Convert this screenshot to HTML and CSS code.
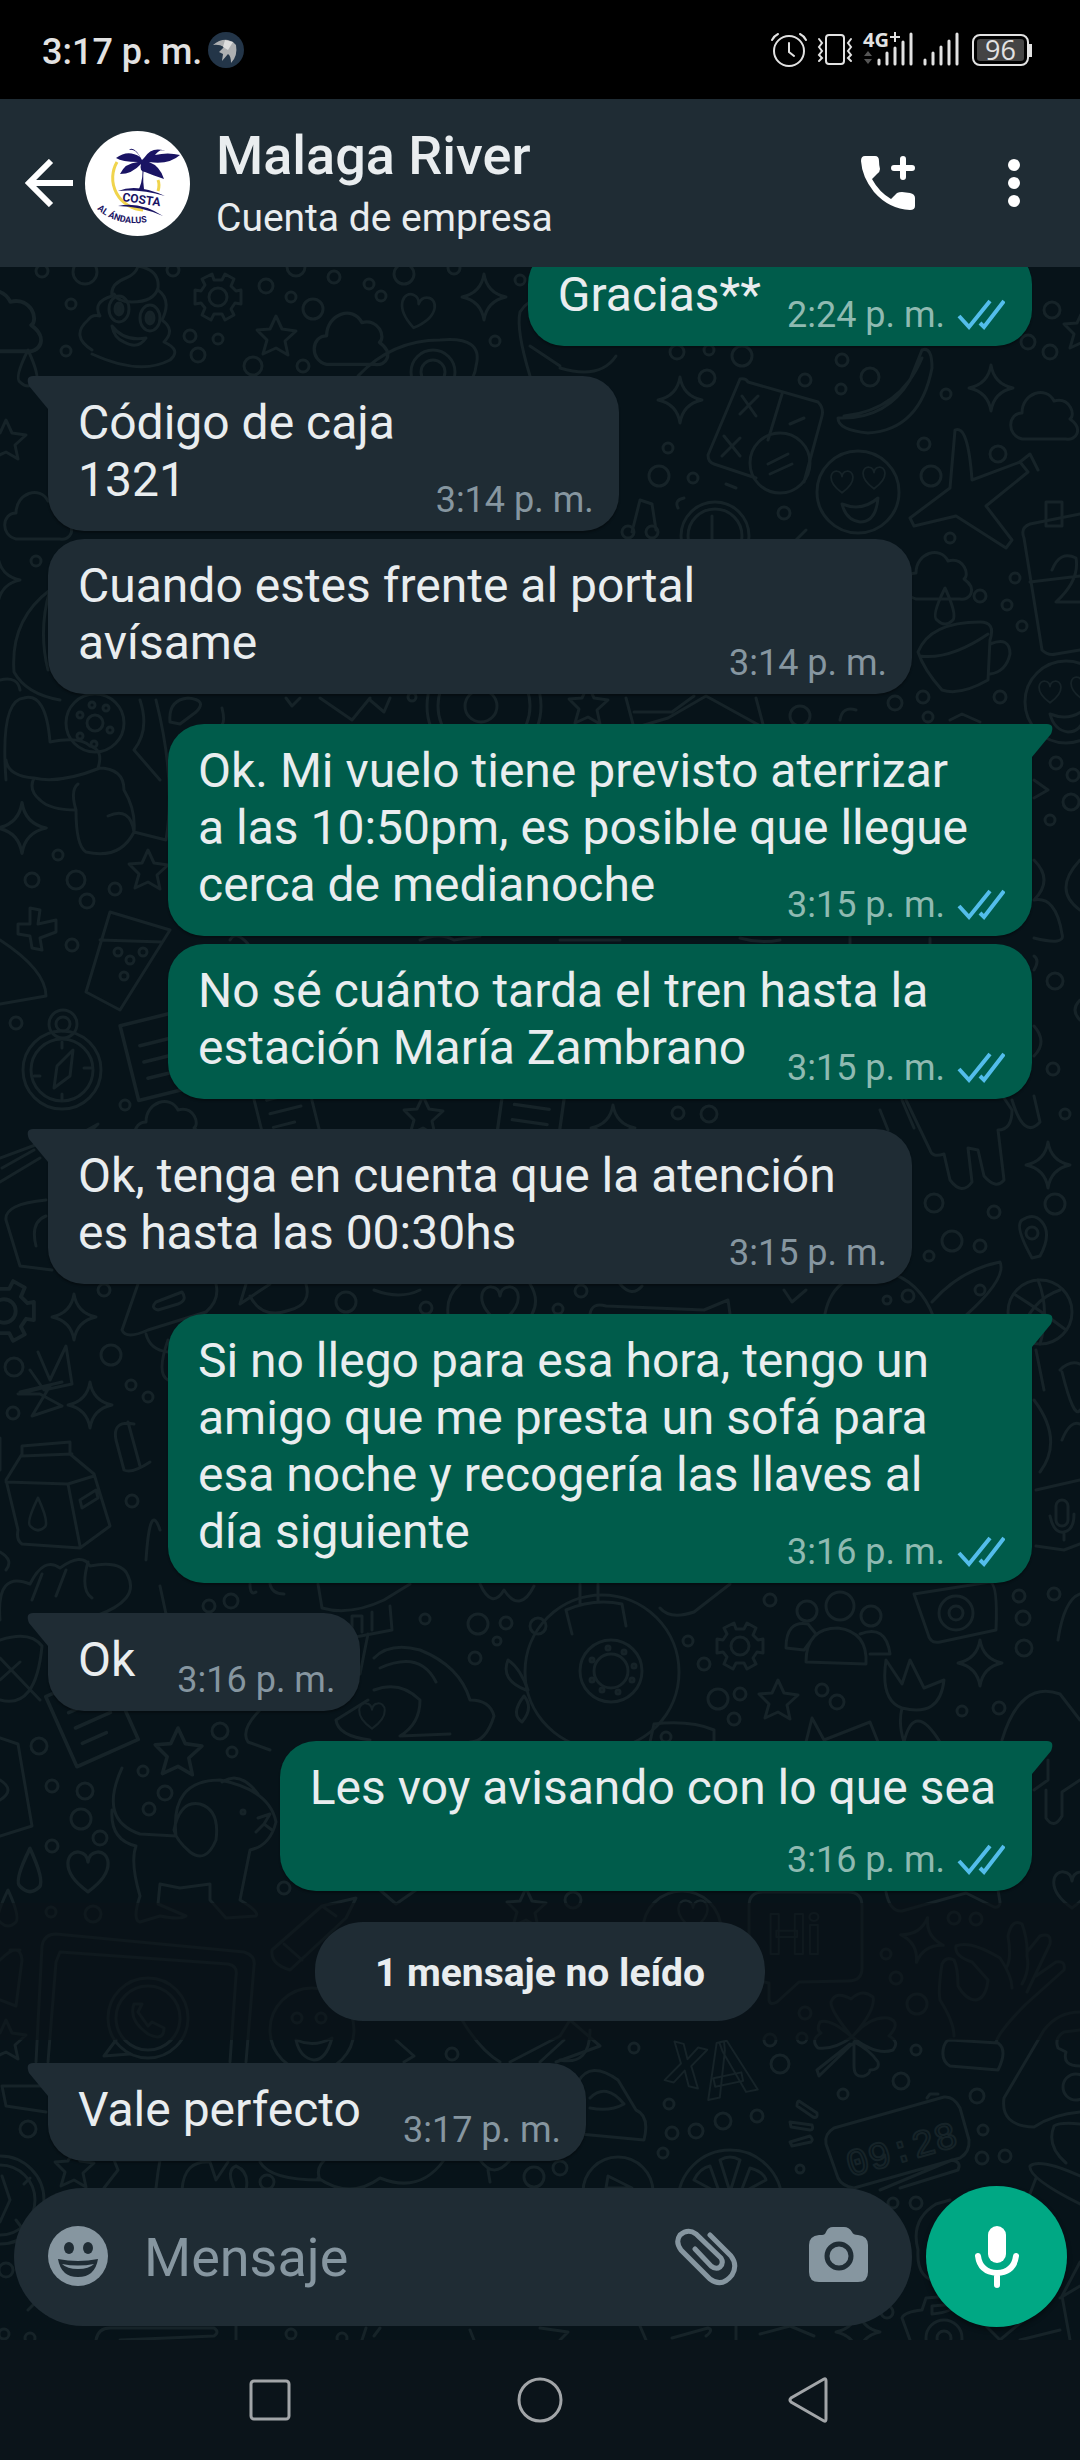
FILE: index.html
```html
<!DOCTYPE html>
<html lang="es">
<head>
<meta charset="utf-8">
<meta name="viewport" content="width=device-width, initial-scale=1">
<title>Malaga River</title>
<link rel="stylesheet" href="styles.css">
</head>
<body>
<svg class="sprite" aria-hidden="true">
  <defs>
    <symbol id="ticks" viewBox="0 0 48 32"><path d="M2 17 L12 28 L33 2 M23 24 L27 28 L47 2" fill="none" stroke="#53bdeb" stroke-width="4"/></symbol>
    <path id="spark" d="M0 -23 Q3 -4 22 0 Q3 4 0 23 Q-3 4 -22 0 Q-3 -4 0 -23Z"/>
    <path id="star" d="M0 -20 L6 -7 L20 -5 L9 5 L12 19 L0 12 L-13 18 L-9 4 L-19 -6 L-6 -7Z"/>
    <path id="heart" d="M0 18 C-28 -2 -18 -20 -8 -18 Q-1 -17 0 -9 Q1 -17 8 -18 C18 -20 28 -2 0 18Z"/>
    <path id="cloud" d="M-24 24 C-40 20 -38 -2 -24 -2 C-24 -22 0 -30 8 -14 C24 -18 30 0 24 4 C38 14 30 26 20 24Z"/>
    <path id="drop" d="M0 -18 Q-14 10 -8 14 Q0 22 8 14 Q12 8 0 -18Z"/>
    <path id="note" d="M-28 -32 H28 V32 H-28Z M-16 -12 H16 M-16 2 H16 M-16 16 H6"/>
    <g id="gear"><circle r="9"/><path d="M-6 -23 L-4 -17 H4 L7 -23 L16 -18 L13 -11 L18 -6 L23 -7 V7 L17 6 L13 12 L16 18 L7 23 L4 17 H-4 L-7 23 L-16 18 L-13 11 L-17 6 L-23 7 V-7 L-17 -6 L-13 -12 L-16 -18Z"/></g>
    <g id="love"><circle r="41"/><use href="#heart" transform="translate(-16 -10) scale(.6)"/><use href="#heart" transform="translate(16 -14) scale(.6)"/><path d="M-16 12 Q4 20 20 6 Q18 30 2 30 Q-12 28 -16 12Z"/></g>
    <g id="face"><circle r="42"/><circle cx="-15" cy="-12" r="5"/><circle cx="9" cy="-12" r="5"/><path d="M-16 10 Q2 18 20 8 Q14 30 2 30 Q-12 28 -16 10Z"/></g>
  </defs>
</svg>

<div class="phone">
  <div class="status">
    <span class="status-time">3:17 p. m.</span>
    <svg class="bird" viewBox="0 0 36 36" aria-hidden="true"><circle cx="18" cy="18" r="18" fill="#233548"/><path d="M5 13 Q12 7 20 8 L25 10 L28 13 Q30 24 23 31 Q23 24 20 22 L14 29 L15 22 L11 20 L16 15 Q11 12 5 13Z" fill="#aeb0b2"/><path d="M17 8 L25 10 L20 18 L15 15Z" fill="#dedede"/></svg>
    <div class="status-icons">
      <svg class="i-alarm" viewBox="0 0 36 36" fill="none" stroke="#e2e2e2" stroke-width="2" stroke-linecap="round" aria-hidden="true"><circle cx="18" cy="19" r="15"/><path d="M18 11 V20 L23 24 M1 8 Q3 4 7 2 M29 2 Q33 4 35 8"/></svg>
      <svg class="i-vibrate" viewBox="0 0 36 36" fill="none" stroke="#e2e2e2" stroke-width="2" stroke-linecap="round" aria-hidden="true"><rect x="9" y="3" width="18" height="29" rx="3"/><path d="M2 7 L5 11 L2 15 L5 19 L2 23 L5 26 L2 29 M34 7 L31 11 L34 15 L31 19 L34 23 L31 26 L34 29"/></svg>
      <svg class="i-signal-4g" viewBox="0 0 50 36" aria-hidden="true"><text x="0" y="15" class="net">4G</text><path d="M32 0 V10 M27 5 H37" stroke="#e2e2e2" stroke-width="2"/><path d="M16 28 V32 M24 21 V32 M32 16 V32 M40 10 V32 M48 2 V32" stroke="#e2e2e2" stroke-width="3" stroke-linecap="round"/><path d="M1 24 L5 19 L9 24Z M1 27 L5 32 L9 27Z" fill="#555"/></svg>
      <svg class="i-signal" viewBox="0 0 36 36" aria-hidden="true"><path d="M2 28 V32 M10 21 V32 M18 15 V32 M26 9 V32 M34 2 V32" stroke="#e2e2e2" stroke-width="3" stroke-linecap="round"/></svg>
      <span class="battery">96</span>
    </div>
  </div>

  <header class="header">
    <button class="icon-btn" aria-label="Atrás"><svg width="48" height="48" viewBox="0 0 48 48" fill="none" stroke="#fff" stroke-width="6" aria-hidden="true"><path d="M26 2 L4 24 L26 46 M4 24 H48"/></svg></button>
    <svg class="avatar" viewBox="0 0 105 105" aria-hidden="true">
      <circle cx="52.5" cy="52.5" r="52.5" fill="#fff"/>
      <path d="M32 31 A32 32 0 0 0 58 79 M73 49 Q75 54 73 60" fill="none" stroke="#f0d44c" stroke-width="3"/>
      <g fill="#1a1464">
        <path d="M57 29 Q49 14 44 19 Q50 17 55 26 Q43 18 31 27 Q37 31 53 31 Q40 32 35 43 Q47 43 56 33 Q54 40 60 41 Q67 44 79 48 Q75 35 64 31 Q84 34 95 24 Q83 21 70 24 Q76 17 80 20 Q67 15 59 27Z"/>
        <path d="M57 31 H60 Q57 44 59 58 H54 Q59 47 57 31Z"/>
        <path d="M33 60 Q52 52 80 65 Q55 58 33 60Z M33 75 Q55 70 78 85 Q55 75 33 75Z"/>
        <text x="37" y="70" transform="rotate(8 37 70)" class="logo-a">COSTA</text>
        <path id="logo-curve" d="M12 78 Q32 96 63 91" fill="none"/>
        <text class="logo-b"><textPath href="#logo-curve">AL ÁNDALUS</textPath></text>
      </g>
    </svg>
    <div class="contact">
      <h1>Malaga River</h1>
      <p>Cuenta de empresa</p>
    </div>
    <div class="actions">
      <button class="icon-btn" aria-label="Llamar"><svg width="54" height="56" viewBox="0 0 54 56" aria-hidden="true"><path d="M4 1 H14 Q18 1 18 6 Q18 10 19 14 Q19 17 16 19 L11 24 Q18 37 30 44 L36 38 Q38 37 41 37 L49 38 Q54 39 54 43 V51 Q54 55 49 55 Q28 54 13 37 Q1 22 0 6 Q0 1 4 1Z" fill="#fff"/><path d="M42 4 V22 M33 13 H51" stroke="#fff" stroke-width="6" stroke-linecap="round"/></svg></button>
      <button class="icon-btn" aria-label="Más opciones"><svg width="12" height="48" viewBox="0 0 12 48" fill="#fff" aria-hidden="true"><circle cx="6" cy="6" r="6"/><circle cx="6" cy="24" r="6"/><circle cx="6" cy="42" r="6"/></svg></button>
    </div>
  </header>

  <main class="chat">
    <svg class="wallpaper" viewBox="0 267 1080 2073" preserveAspectRatio="xMidYMin slice" aria-hidden="true">
      <!-- small bubbles -->
      <g>
        <circle cx="42" cy="271" r="6"/><circle cx="85" cy="272" r="12"/><circle cx="173" cy="270" r="6"/><circle cx="266" cy="286" r="7"/><circle cx="291" cy="297" r="5"/><circle cx="313" cy="309" r="10"/><circle cx="296" cy="267" r="9"/><circle cx="334" cy="277" r="6"/><circle cx="369" cy="284" r="5"/><circle cx="381" cy="296" r="5"/><circle cx="404" cy="274" r="10"/><circle cx="454" cy="268" r="6"/><circle cx="520" cy="280" r="5"/><circle cx="71" cy="304" r="5"/><circle cx="66" cy="351" r="5"/><circle cx="190" cy="336" r="6"/><circle cx="218" cy="339" r="5"/><circle cx="198" cy="355" r="7"/><circle cx="253" cy="366" r="9"/><circle cx="303" cy="366" r="6"/><circle cx="495" cy="341" r="5"/><circle cx="1052" cy="310" r="8"/><circle cx="1028" cy="342" r="7"/><circle cx="1050" cy="352" r="7"/><circle cx="677" cy="352" r="7"/><circle cx="709" cy="350" r="5"/><circle cx="742" cy="356" r="10"/>
        <circle cx="707" cy="378" r="8"/><circle cx="805" cy="380" r="6"/><circle cx="841" cy="389" r="5"/><circle cx="842" cy="360" r="6"/><circle cx="870" cy="377" r="9"/><circle cx="946" cy="394" r="5"/><circle cx="924" cy="444" r="6"/><circle cx="998" cy="454" r="8"/><circle cx="668" cy="448" r="5"/><circle cx="659" cy="476" r="10"/><circle cx="693" cy="478" r="5"/><circle cx="931" cy="476" r="10"/><circle cx="784" cy="513" r="6"/><circle cx="950" cy="538" r="5"/><circle cx="980" cy="596" r="6"/><circle cx="1007" cy="605" r="5"/><circle cx="1015" cy="578" r="5"/><circle cx="1022" cy="626" r="5"/><circle cx="36" cy="561" r="5"/><circle cx="895" cy="703" r="7"/><circle cx="923" cy="697" r="6"/><circle cx="1000" cy="697" r="6"/><circle cx="928" cy="717" r="5"/><circle cx="412" cy="697" r="4"/><circle cx="800" cy="716" r="10"/>
        <circle cx="58" cy="855" r="5"/><circle cx="32" cy="880" r="7"/><circle cx="76" cy="880" r="9"/><circle cx="115" cy="889" r="6"/><circle cx="87" cy="901" r="7"/><circle cx="72" cy="945" r="6"/><circle cx="16" cy="1023" r="6"/><circle cx="125" cy="1105" r="5"/><circle cx="678" cy="1113" r="6"/><circle cx="709" cy="1114" r="8"/><circle cx="1056" cy="763" r="6"/><circle cx="1073" cy="775" r="6"/><circle cx="1071" cy="802" r="8"/><circle cx="1050" cy="820" r="5"/><circle cx="1055" cy="981" r="8"/><circle cx="1053" cy="1069" r="6"/><circle cx="1065" cy="1114" r="5"/>
        <circle cx="934" cy="1203" r="9"/><circle cx="1055" cy="1204" r="10"/><circle cx="994" cy="1212" r="6"/><circle cx="952" cy="1241" r="10"/><circle cx="980" cy="1246" r="6"/><circle cx="929" cy="1256" r="5"/><circle cx="104" cy="1290" r="6"/><circle cx="111" cy="1355" r="10"/><circle cx="14" cy="1367" r="9"/><circle cx="131" cy="1385" r="5"/><circle cx="148" cy="1397" r="5"/><circle cx="13" cy="1413" r="6"/><circle cx="346" cy="1302" r="10"/><circle cx="426" cy="1308" r="6"/><circle cx="581" cy="1291" r="6"/><circle cx="558" cy="1309" r="5"/><circle cx="132" cy="1501" r="6"/>
        <circle cx="425" cy="1619" r="5"/><circle cx="478" cy="1624" r="10"/><circle cx="506" cy="1623" r="6"/><circle cx="538" cy="1626" r="8"/><circle cx="497" cy="1641" r="4"/><circle cx="475" cy="1658" r="6"/><circle cx="688" cy="1641" r="5"/><circle cx="704" cy="1664" r="6"/><circle cx="718" cy="1699" r="10"/><circle cx="740" cy="1694" r="6"/><circle cx="770" cy="1600" r="6"/><circle cx="822" cy="1690" r="6"/><circle cx="837" cy="1702" r="7"/><circle cx="734" cy="1719" r="6"/><circle cx="1019" cy="1596" r="6"/><circle cx="1054" cy="1594" r="6"/><circle cx="1023" cy="1618" r="7"/><circle cx="1024" cy="1648" r="8"/><circle cx="962" cy="1711" r="5"/><circle cx="999" cy="1708" r="6"/><circle cx="39" cy="1746" r="8"/><circle cx="220" cy="1731" r="8"/><circle cx="232" cy="1752" r="5"/><circle cx="143" cy="1771" r="5"/><circle cx="52" cy="1786" r="6"/><circle cx="85" cy="1791" r="8"/><circle cx="81" cy="1819" r="10"/><circle cx="165" cy="1793" r="7"/><circle cx="149" cy="1809" r="6"/><circle cx="100" cy="1838" r="7"/><circle cx="52" cy="1846" r="6"/><circle cx="284" cy="1888" r="6"/><circle cx="573" cy="1900" r="8"/><circle cx="51" cy="1912" r="5"/><circle cx="93" cy="1914" r="8"/>
        <circle cx="954" cy="1918" r="6"/><circle cx="976" cy="1919" r="6"/><circle cx="886" cy="1954" r="5"/><circle cx="896" cy="1978" r="6"/><circle cx="917" cy="2004" r="10"/><circle cx="805" cy="2013" r="6"/><circle cx="770" cy="2040" r="6"/><circle cx="802" cy="2038" r="5"/><circle cx="916" cy="2050" r="5"/><circle cx="780" cy="2064" r="9"/><circle cx="901" cy="2081" r="8"/><circle cx="843" cy="2094" r="5"/><circle cx="977" cy="2096" r="7"/><circle cx="634" cy="2048" r="5"/><circle cx="452" cy="2054" r="6"/><circle cx="669" cy="2104" r="5"/><circle cx="757" cy="2116" r="6"/><circle cx="723" cy="2121" r="8"/><circle cx="672" cy="2133" r="6"/><circle cx="696" cy="2131" r="7"/><circle cx="663" cy="2153" r="5"/><circle cx="28" cy="2129" r="8"/><circle cx="983" cy="2130" r="5"/><circle cx="982" cy="2158" r="6"/><circle cx="1005" cy="2156" r="6"/><circle cx="560" cy="2168" r="7"/><circle cx="534" cy="2177" r="10"/><circle cx="267" cy="2182" r="7"/><circle cx="800" cy="2169" r="4"/><circle cx="893" cy="2203" r="5"/><circle cx="916" cy="2203" r="6"/><circle cx="887" cy="2312" r="6"/><circle cx="4" cy="2334" r="5"/><circle cx="30" cy="2338" r="5"/><circle cx="291" cy="2334" r="5"/><circle cx="6" cy="2270" r="7"/><circle cx="342" cy="2338" r="5"/>
      </g>
      <!-- repeated shapes -->
      <use href="#gear" x="218" y="297"/><use href="#gear" x="740" y="1646"/><use href="#gear" transform="translate(4 1311) scale(1.3)"/>
      <use href="#heart" transform="translate(417 312) rotate(12) scale(.9)"/><use href="#heart" transform="translate(88 1872) scale(1.1)"/><use href="#heart" transform="translate(372 1716) scale(.7)"/><use href="#heart" transform="translate(500 1305) scale(1)"/><use href="#heart" transform="translate(1072 1890)"/><use href="#heart" transform="translate(693 1915) scale(.8)"/>
      <use href="#spark" x="484" y="297"/><use href="#spark" x="680" y="400"/><use href="#spark" x="991" y="388"/><use href="#spark" transform="translate(22 828) scale(1.1)"/><use href="#spark" x="74" y="1317"/><use href="#spark" x="90" y="1405"/><use href="#spark" x="1048" y="1165"/><use href="#spark" x="980" y="1663"/><use href="#spark" transform="translate(922 1940) rotate(14)"/><use href="#spark" x="858" y="2332"/><use href="#spark" x="613" y="1128"/><use href="#spark" x="-2" y="580"/>
      <use href="#star" x="276" y="336"/><use href="#star" x="1083" y="330"/><use href="#star" x="6" y="440"/><use href="#star" x="588" y="705"/><use href="#star" x="148" y="870"/><use href="#star" x="423" y="1116"/><use href="#star" x="778" y="1700"/><use href="#star" transform="translate(178 1752) scale(1.2)"/><use href="#star" x="74" y="2168"/><use href="#star" x="6" y="2040"/><use href="#star" x="526" y="1908"/>
      <use href="#cloud" transform="translate(0 320) scale(1.3)"/><use href="#cloud" transform="translate(353 338) scale(1.1)"/><use href="#cloud" transform="translate(1046 415)"/><use href="#cloud" x="40" y="515"/><use href="#cloud" transform="translate(940 575)"/><use href="#cloud" transform="translate(170 1124)"/>
      <use href="#drop" x="945" y="606"/><use href="#drop" x="28" y="368"/><use href="#drop" transform="translate(30 1870) scale(1.2)"/><use href="#drop" x="8" y="1908"/>
      <use href="#love" x="858" y="492"/><use href="#love" x="1066" y="702"/><use href="#face" x="312" y="2030"/>
      <use href="#note" transform="translate(92 1718) rotate(-24) scale(1.2)"/><use href="#note" transform="translate(162 1055) rotate(-14) scale(1.2)"/><use href="#note" transform="translate(285 1108) rotate(-14)"/><use href="#note" transform="translate(530 1120) rotate(8) scale(1.1)"/>
      <!-- ice swirl, avocado, calculator, banana -->
      <path d="M92 350 Q70 336 88 320 Q92 314 100 316 Q92 302 112 296 Q110 284 126 278 Q136 274 138 266 Q160 270 158 288 Q154 302 132 302 Q118 302 114 294 M158 290 Q172 300 162 320 Q176 330 164 342 Q182 350 170 360 Q140 376 92 354 M112 326 Q124 342 146 338 Q138 350 124 342 Q114 338 112 326"/>
      <ellipse cx="119" cy="309" rx="10" ry="13"/><ellipse cx="150" cy="318" rx="10" ry="13"/>
      <ellipse class="solid" cx="119" cy="309" rx="4" ry="6"/><ellipse class="solid" cx="150" cy="318" rx="4" ry="6"/>
      <path d="M358 376 Q392 340 440 340 Q484 336 476 366 Q474 390 440 396"/><circle cx="433" cy="372" r="22"/><circle cx="433" cy="372" r="12"/>
      <path d="M530 376 Q516 330 520 312 Q530 296 546 300 M560 368 Q600 380 616 356 M530 346 L560 366"/>
      <path d="M740 379 Q746 378 748 382 L818 402 Q824 408 822 416 L804 482 M740 379 L708 455 Q708 462 714 464 L756 478 M742 396 L756 416 M758 396 L740 414 M724 436 L740 456 M740 438 L722 456 M782 394 L768 440 M790 424 L804 418"/><circle cx="780" cy="463" r="30"/><path d="M768 464 L788 454 M770 474 L792 464"/>
      <path d="M922 350 Q932 346 932 368 Q920 430 868 433 Q838 430 838 418 Q886 420 910 380Z M844 416 Q900 410 922 358"/>
      <path d="M955 430 Q968 424 972 480 L1020 462 L1028 472 L986 506 L1012 540 L1006 548 L956 516 L914 526 L910 518 L950 488Z"/><path d="M1020 462 L1030 454 L1038 470 M1046 502 H1062 V526 H1046Z"/>
      <path d="M1080 514 L1030 524 Q1020 528 1024 538 L1042 650 Q1048 656 1056 654 L1080 650 M1030 582 L1080 576 M1052 570 Q1060 550 1076 558 Q1080 580 1056 602 H1080"/>
      <path d="M640 500 L632 532 M652 504 L656 530 M640 500 L652 504"/><circle cx="628" cy="532" r="6"/><circle cx="652" cy="532" r="6"/><circle cx="715" cy="536" r="34"/><circle cx="715" cy="536" r="27"/><path d="M712 516 V540 L704 546 M678 508 Q674 500 684 498 M736 488 L726 484 M796 540 L806 530"/>
      <path d="M918 652 Q930 622 980 622 Q996 622 990 640 L988 680 Q960 696 942 690 Q924 670 918 652Z M920 656 Q950 660 988 634 M990 644 Q1010 636 1010 654 Q1006 672 990 674"/>
      <!-- left column: wreath, hand, donut -->
      <path d="M50 590 Q10 620 14 672 Q26 694 60 700 M50 590 Q38 630 48 670 M0 680 Q18 676 20 690 M6 780 Q0 700 24 698 Q46 692 50 742 Q80 736 90 746 Q104 750 98 768 Q124 768 124 790 Q136 810 134 832 Q120 860 86 852 Q76 846 76 810 Q50 810 40 800 Q28 790 34 778 Q8 776 6 760 M34 778 Q60 784 100 768 M76 810 Q70 790 78 784 M108 816 Q130 806 134 832 M134 832 L166 840 Q176 780 156 700"/>
      <circle cx="95" cy="723" r="29"/><circle cx="95" cy="723" r="8"/><circle cx="80" cy="715" r="3"/><circle cx="92" cy="705" r="3"/><circle cx="106" cy="708" r="3"/><circle cx="110" cy="730" r="3"/><circle cx="80" cy="736" r="3"/><circle cx="94" cy="744" r="3"/>
      <path d="M140 700 Q150 730 134 750 L160 780 M170 722 Q168 700 188 698 Q208 700 196 712 L180 724Z M222 708 Q226 724 220 726 M320 698 L352 720 L370 698 M286 698 L292 706 L300 698 M370 700 L384 712 L390 698"/><circle cx="484" cy="706" r="57"/><circle cx="484" cy="706" r="46"/><circle cx="481" cy="706" r="16"/>
      <path d="M626 698 L634 728 L668 718 L706 696 L764 728 L756 698 M634 712 H672 L694 696 M840 720 Q842 706 856 710 M950 720 L962 714 L980 722"/>
      <path d="M30 908 L40 910 L38 924 L56 920 L56 932 L40 938 L42 950 L32 948 L30 936 L18 934 L18 924 L30 924Z M110 912 L170 930 L120 1010 L86 992Z M100 940 L162 942 M0 940 Q46 970 46 996 L0 1004"/><circle cx="118" cy="952" r="4"/><circle cx="130" cy="960" r="4"/><circle cx="124" cy="976" r="4"/><circle cx="143" cy="952" r="4"/>
      <circle cx="62" cy="1070" r="39"/><circle cx="62" cy="1070" r="31"/><circle cx="63" cy="1024" r="14"/><circle cx="63" cy="1024" r="7"/><path d="M73 1050 L70 1076 L54 1088 L57 1066Z M62 1042 V1048 M92 1068 H84 M34 1076 H40 M62 1100 V1094"/>
      <path d="M230 940 Q236 930 248 944 M420 940 Q440 932 454 940 L480 936 M560 940 H620 M740 938 Q760 944 780 940 M850 936 V944 M930 938 V944"/>
      <!-- right edge -->
      <path d="M1034 780 L1048 790 L1034 798 M1034 860 Q1054 880 1034 900 M1034 900 Q1056 896 1062 934 Q1066 946 1034 938 M1080 860 Q1052 890 1080 910 M1034 970 Q1040 960 1034 956 M1034 1026 Q1048 1042 1034 1056 M1080 1000 Q1070 1010 1080 1020"/>
      <path d="M880 1110 L888 1130 M902 1100 L914 1128 M906 1100 L930 1150 Q932 1158 944 1154 L950 1180 Q962 1196 972 1182 L968 1148 L978 1150 L984 1176 Q996 1190 1004 1180 L998 1130 Q1012 1130 1012 1110 L1004 1098 M1012 1100 Q1024 1140 1040 1122 L1034 1096"/>
      <path d="M1032 1258 Q1014 1226 1022 1220 Q1034 1212 1042 1222 Q1052 1234 1040 1256Z"/><circle cx="1032" cy="1233" r="6"/>
      <path d="M824 1320 Q830 1270 886 1272 L898 1260 M886 1272 Q920 1280 934 1318 M932 1302 Q960 1270 1000 1262 Q1008 1280 956 1324"/><circle cx="887" cy="1300" r="4"/><circle cx="908" cy="1296" r="6"/><circle cx="980" cy="1290" r="5"/>
      <circle cx="1040" cy="1312" r="32"/><path d="M1014 1294 Q1040 1310 1066 1330 M1060 1290 Q1030 1300 1020 1336 M1038 1280 Q1050 1310 1040 1344"/>
      <path d="M1036 1350 L1044 1390 M1060 1370 Q1070 1360 1080 1364 M1062 1372 Q1074 1420 1080 1410 M1034 1400 Q1064 1440 1040 1472 M1062 1440 Q1070 1420 1080 1424 M1036 1490 L1080 1480 M1036 1546 L1064 1550 L1080 1544"/><rect x="1056" y="1500" width="12" height="26" rx="6"/><path d="M1050 1516 Q1054 1534 1064 1532 Q1074 1530 1074 1514 M1064 1532 V1540"/>
      <!-- left: flag, cone, windmill, carton, fist -->
      <path d="M0 1158 L38 1144 M0 1182 L40 1158 M2 1168 L34 1150 M46 1200 Q4 1204 6 1220 L20 1266 L52 1270 M46 1216 Q30 1222 36 1246 M80 1134 L98 1124 L88 1134"/>
      <path d="M138 1284 L122 1330 Q126 1340 148 1330 L206 1312 Q220 1300 216 1284 M156 1302 L182 1292 Q188 1300 178 1304 L158 1310 Q150 1308 156 1302 M146 1334 Q150 1350 168 1352 M246 1284 L240 1304 L270 1284 M250 1296 Q262 1320 290 1310 Q312 1304 306 1284 M374 1290 Q400 1300 420 1290 M448 1314 Q446 1296 460 1284 M530 1284 Q540 1300 532 1314 M590 1314 Q592 1302 606 1306 L704 1310 L728 1300 L730 1314 M784 1290 L792 1302 L806 1290 M620 1284 Q632 1298 642 1286"/>
      <path d="M38 1352 L50 1380 L66 1346 L72 1384 L44 1390 L30 1370 M20 1392 L62 1382 M18 1394 L40 1394 L62 1406 L32 1416 L50 1386Z M134 1424 Q112 1420 116 1440 L124 1470 Q132 1474 150 1462 M128 1422 L140 1466 M0 1438 V1470 M168 1340 Q156 1374 168 1380"/>
      <path d="M22 1446 L70 1442 V1454 L94 1474 L110 1526 L80 1548 L22 1544 Q16 1540 18 1530 L6 1480 L22 1454 Z M22 1456 L72 1454 M6 1482 L68 1484 L94 1476 M68 1484 L80 1546 M80 1500 L96 1490 L98 1498 L82 1508Z"/><use href="#drop" transform="translate(38 1514) scale(.9)"/>
      <path d="M146 1560 Q150 1500 160 1530 M0 1620 Q-4 1570 30 1584 Q44 1556 60 1568 Q82 1552 90 1566 Q122 1560 128 1576 Q140 1600 96 1616 M32 1600 L42 1574 M56 1596 L66 1570 M88 1562 Q80 1590 92 1598 M0 1552 Q14 1560 6 1570 M250 1584 Q250 1596 256 1592 M270 1584 Q272 1594 284 1594"/><circle cx="231" cy="1601" r="7"/><circle cx="209" cy="1606" r="6"/>
      <!-- bauble, people, camera, tulip -->
      <circle cx="602" cy="1672" r="77"/><circle cx="611" cy="1671" r="31"/><circle cx="611" cy="1671" r="17"/><g><circle cx="608" cy="1648" r="2"/><circle cx="624" cy="1652" r="2"/><circle cx="634" cy="1666" r="2"/><circle cx="632" cy="1680" r="2"/><circle cx="618" cy="1692" r="2"/><circle cx="602" cy="1690" r="2"/><circle cx="592" cy="1680" r="2"/><circle cx="592" cy="1660" r="2"/></g>
      <path d="M572 1634 L566 1610 Q594 1598 622 1604 L626 1626 M580 1604 V1584 M598 1602 V1584 M526 1690 Q500 1680 508 1660 Q520 1668 528 1690 M524 1696 Q510 1714 522 1722 Q534 1708 524 1696 M660 1608 Q670 1620 694 1612 L730 1584 M480 1584 Q492 1610 504 1590 Q520 1614 534 1586 M318 1584 L322 1608 Q350 1616 384 1600 L410 1584 M390 1606 L392 1630 L340 1640 L338 1620 M352 1634 V1616 H362 V1632 M372 1630 V1612"/>
      <circle cx="840" cy="1606" r="14"/><circle cx="807" cy="1611" r="10"/><circle cx="871" cy="1616" r="10"/><path d="M806 1662 Q806 1628 838 1628 Q868 1632 866 1664Z M786 1648 Q786 1620 808 1624 L816 1634 L804 1650Z M860 1634 Q886 1624 890 1654 L870 1654"/>
      <path d="M914 1594 L990 1582 Q998 1584 996 1630 L940 1642 Q930 1644 928 1634Z"/><circle cx="956" cy="1613" r="17"/><circle cx="956" cy="1613" r="7"/><path d="M1058 1640 Q1064 1600 1080 1594 M886 1660 Q880 1700 902 1708 Q940 1718 944 1680 L924 1688 L910 1660 L902 1684Z M902 1708 Q898 1724 904 1742 M904 1742 Q914 1700 940 1742 M1002 1740 Q1020 1680 1060 1694 L1080 1720 M1034 1790 L1048 1780 V1760 M1046 1790 V1818 Q1054 1830 1062 1816 V1792 L1080 1780 M650 1742 L654 1724 Q690 1720 714 1730 V1742 M806 1742 L812 1718 L824 1740 L870 1722 L878 1742"/><circle cx="666" cy="1737" r="5"/>
      <path d="M0 1640 Q30 1630 42 1646 Q36 1710 0 1700 M0 1658 L40 1700 M20 1662 L0 1680 M160 1586 L166 1614 L190 1620"/>
      <!-- swan, dog, book -->
      <path d="M374 1658 Q390 1642 420 1650 Q460 1666 470 1700 Q490 1700 494 1716 Q486 1742 470 1742 M380 1668 Q420 1650 436 1682 M374 1690 Q400 1680 420 1700 Q420 1724 400 1736 L450 1734 M368 1700 Q352 1710 336 1720 Q338 1736 370 1740 M260 1710 Q240 1730 248 1742 L270 1750 M368 1634 L360 1674"/>
      <path d="M122 1768 Q98 1820 140 1834 L176 1836 Q170 1780 220 1780 Q270 1790 276 1822 Q270 1846 250 1850 L240 1900 Q260 1912 256 1916 L226 1918 L210 1900 V1884 L180 1888 L160 1884 L158 1904 L186 1916 Q180 1920 160 1916 L140 1922 Q132 1920 140 1896 Q130 1862 136 1846 Q110 1840 112 1810 M174 1830 Q180 1800 200 1804 Q220 1810 216 1840 Q206 1864 190 1852 Q176 1840 174 1830 M222 1782 Q240 1770 258 1794"/><circle cx="243" cy="1812" r="2"/><path d="M258 1818 L270 1814 L264 1824 L256 1832 M264 1824 L272 1830"/>
      <path d="M0 1738 L18 1744 L32 1826 L0 1836 M0 1780 Q16 1790 0 1800"/>
      <!-- pencil, greeting, frame, clover, hand -->
      <path d="M356 1898 L322 1906 L272 1950 Q270 1964 290 1970 L346 1918Z M284 1944 L302 1960 M322 1906 L336 1916 M380 1890 L396 1904 L416 1890"/>
      <path d="M763 1892 H848 Q862 1892 862 1906 V1968 Q862 1981 848 1981 L799 1982 L777 2002 Q770 2006 769 2000 V1983 Q749 1980 749 1966 V1906 Q749 1892 763 1892Z"/><text x="767" y="1954" class="doodle-text">Hi</text>
      <path d="M886 1892 Q890 1912 902 1911 L966 1893 L994 1907 Q1000 1908 1000 1902 L998 1890"/><circle cx="682" cy="1930" r="39"/>
      <path d="M36 2062 L42 1946 Q44 1934 56 1934 L244 1952 Q256 1956 254 1966 L246 2062 M48 2062 L56 1962 L60 1952 L228 1964 Q238 1966 236 1976 L230 2062"/>
      <circle cx="148" cy="2018" r="40"/><circle cx="148" cy="2018" r="32"/><path d="M116 2040 L104 2056 L130 2054 M134 2004 Q128 2020 148 2034 Q164 2042 164 2028 L152 2022 L148 2026 L138 2012 L142 2004Z"/>
      <path d="M954 2036 Q954 2022 940 2000 Q938 1990 942 1964 Q946 1956 954 1960 Q958 1968 958 1986 Q966 2000 976 2000 Q986 1998 988 1980 L972 1962 Q954 1956 956 1946 Q970 1940 1000 1958 Q1012 1976 1012 1988 M1006 1968 Q1012 1960 1008 1936 Q1012 1918 1022 1924 Q1028 1940 1027 1956 Q1030 1970 1022 1984 M1027 1952 L1040 1936 Q1052 1932 1050 1944 L1027 1992 M1036 1976 L1056 1962 Q1066 1960 1064 1970 L1026 2004 Q1000 2030 996 2042 M950 2040 L998 2043 Q1008 2050 998 2070 L950 2066 Q940 2060 944 2046 Q946 2040 950 2040"/>
      <path d="M852 2037 Q830 2010 831 2002 Q836 1990 851 1999 Q862 1988 873 1997 Q876 2010 852 2037 Q830 2018 820 2022 Q816 2030 821 2033 Q810 2040 818 2048 Q834 2050 852 2037 Q870 2016 888 2018 Q902 2022 889 2036 Q900 2042 893 2050 Q876 2056 852 2037 M854 2042 V2066 Q854 2078 864 2076 Q870 2074 870 2070 Q880 2070 878 2062 Q870 2050 854 2042 M850 2044 L817 2070 L819 2076 L852 2044"/>
      <path d="M1080 2012 Q1058 2012 1044 2030 L1004 2098 Q1000 2126 1034 2127 Q1054 2114 1080 2112 M1080 2030 L1064 2032 Q1054 2038 1058 2048 L1066 2052 Q1062 2066 1080 2066"/><circle cx="1076" cy="2087" r="13"/>
      <text x="664" y="2080" class="doodle-text" transform="rotate(14 664 2080)">X</text><text x="708" y="2100" class="doodle-letter" transform="rotate(-12 708 2100)">A</text>
      <path d="M396 2040 L414 2056 L404 2062 M462 2020 Q480 2050 500 2062 M510 2062 L560 2036 L570 2020 L600 2046 L556 2062 M540 2062 L564 2040 M0 1960 Q20 1940 22 1960 Q18 1990 16 2006 L0 2000 M10 1950 H20"/>
      <!-- bottom row -->
      <path d="M560 2060 Q590 2066 590 2030 M578 2082 Q590 2060 618 2080 L636 2110 Q650 2116 644 2140 L580 2134 M590 2098 Q606 2082 624 2104 Q610 2112 590 2108 M2 2086 L6 2106 L46 2112 M44 2086 L2 2086"/>
      <path d="M799 2101 L817 2113 Q818 2119 813 2117 L797 2106 Q797 2101 799 2101Z M790 2122 L812 2125 Q814 2130 810 2130 L791 2127Z M790 2142 L810 2136 Q814 2140 811 2142 L792 2146Z"/>
      <path d="M834 2128 L944 2097 Q954 2096 960 2108 L969 2140 Q970 2152 960 2158 L854 2188 Q842 2186 838 2178 L826 2144 Q824 2134 834 2128Z M927 2098 L930 2094 L938 2094 M880 2190 L952 2160 Q962 2162 958 2170 L900 2188"/><text x="850" y="2177" class="doodle-clock" transform="rotate(-16 850 2177)">09:28</text>
      <circle cx="730" cy="2202" r="52"/><path d="M730 2192 L720 2160 Q730 2154 740 2160Z M720 2194 L694 2180 Q700 2168 710 2166Z M740 2194 L750 2168 Q764 2172 766 2180Z"/><circle cx="618" cy="2192" r="35"/><path d="M608 2176 L632 2188 H606Z"/>
      <path d="M104 2188 L118 2170 L114 2160 H160 L158 2172 L156 2188 M124 2160 V2150 H140 V2160 M182 2190 Q184 2160 210 2162 L216 2180 L228 2162 M234 2188 Q226 2170 236 2166 Q250 2172 246 2190 M260 2162 Q270 2180 320 2180 Q314 2166 330 2156 M318 2178 Q350 2200 380 2178 Q420 2194 444 2160 M480 2160 Q494 2180 510 2160 M488 2170 L490 2182"/>
      <circle cx="0" cy="2200" r="44"/><circle cx="0" cy="2200" r="35"/><path d="M2 2176 L10 2200 L0 2222 M24 2184 L30 2178 M16 2220 L22 2228 M28 2310 L38 2300 L50 2316"/>
      <path d="M1080 2176 Q1040 2158 1030 2166 Q1028 2178 1080 2204 M1036 2178 L1020 2220 M1066 2163 Q1046 2146 1054 2126 Q1060 2122 1080 2124 M918 2250 Q910 2220 936 2204 L950 2200 M918 2250 Q916 2280 940 2282 M1080 2262 L1062 2296 L1070 2340 M1060 2298 L1080 2286"/>
      <path d="M910 2340 L902 2318 Q904 2312 922 2310 L926 2298 L950 2296 M932 2306 L956 2304 Q954 2312 932 2314Z"/><circle cx="944" cy="2338" r="18"/><circle cx="944" cy="2338" r="7"/><path d="M984 2324 L1000 2340 L1026 2318 M1020 2340 L1060 2330 M96 2340 Q98 2328 110 2328 L214 2328 Q220 2332 214 2336 L120 2340 M236 2326 V2340 M366 2328 L362 2340 M374 2336 L380 2328 M470 2330 L474 2340 M540 2328 L568 2332 L560 2340 M672 2338 L708 2328 Q714 2330 706 2336 M640 2326 L646 2340 M736 2326 V2340 M760 2334 L790 2326 L814 2336"/>
    </svg>

    <div class="msg out">
      <div class="bubble one"><p>Gracias**</p><span class="meta"><time>2:24 p. m.</time><svg class="ticks"><use href="#ticks"/></svg></span></div>
    </div>
    <div class="msg in first">
      <div class="bubble short"><p>Código de caja<br>1321<span class="meta"><time>3:14 p. m.</time></span></p></div>
    </div>
    <div class="msg in">
      <div class="bubble"><p>Cuando estes frente al portal avísame<span class="meta"><time>3:14 p. m.</time></span></p></div>
    </div>
    <div class="msg out first">
      <div class="bubble"><p>Ok. Mi vuelo tiene previsto aterrizar a las 10:50pm, es posible que llegue cerca de medianoche<span class="meta"><time>3:15 p. m.</time><svg class="ticks"><use href="#ticks"/></svg></span></p></div>
    </div>
    <div class="msg out">
      <div class="bubble"><p>No sé cuánto tarda el tren hasta la estación María Zambrano<span class="meta"><time>3:15 p. m.</time><svg class="ticks"><use href="#ticks"/></svg></span></p></div>
    </div>
    <div class="msg in first">
      <div class="bubble"><p>Ok, tenga en cuenta que la atención es hasta las 00:30hs<span class="meta"><time>3:15 p. m.</time></span></p></div>
    </div>
    <div class="msg out first">
      <div class="bubble"><p>Si no llego para esa hora, tengo un amigo que me presta un sofá para esa noche y recogería las llaves al día siguiente<span class="meta"><time>3:16 p. m.</time><svg class="ticks"><use href="#ticks"/></svg></span></p></div>
    </div>
    <div class="msg in first">
      <div class="bubble one"><p>Ok</p><span class="meta"><time>3:16 p. m.</time></span></div>
    </div>
    <div class="msg out first">
      <div class="bubble stack"><p>Les voy avisando con lo que sea</p><span class="meta"><time>3:16 p. m.</time><svg class="ticks"><use href="#ticks"/></svg></span></div>
    </div>
    <div class="unread"><span>1 mensaje no leído</span></div>
    <div class="msg in first last">
      <div class="bubble one"><p>Vale perfecto</p><span class="meta"><time>3:17 p. m.</time></span></div>
    </div>

    <form class="composer">
      <div class="field">
        <button type="button" class="icon-btn" aria-label="Emojis"><svg width="61" height="61" viewBox="0 0 61 61" aria-hidden="true"><circle cx="30" cy="30" r="30" fill="#8696a0"/><g fill="#1f2c34"><ellipse cx="21" cy="22" rx="5" ry="6"/><ellipse cx="40" cy="22" rx="5" ry="6"/><path d="M10 33 Q30 37 50 33 Q47 51 30 51 Q13 51 10 33Z"/></g><path d="M14 38 Q30 41 46 38 Q41 43 30 43 Q19 43 14 38Z" fill="#8696a0"/></svg></button>
        <input type="text" placeholder="Mensaje" aria-label="Mensaje">
        <button type="button" class="icon-btn clip" aria-label="Adjuntar"><svg width="64" height="58" viewBox="0 0 64 58" fill="none" stroke="#8696a0" stroke-width="5" stroke-linecap="round" aria-hidden="true"><path d="M35 7 L56 28 Q63 37 57 47 Q47 60 35 51 L6 22 Q0 14 5 7 Q13 0 21 6 L46 30 Q49 35 45 39 Q41 42 36 38 L20 21"/></svg></button>
        <button type="button" class="icon-btn" aria-label="Cámara"><svg width="59" height="59" viewBox="0 0 59 59" aria-hidden="true"><path d="M10 8 H13 Q16 8 17 5 Q19 0 24 0 H35 Q40 0 43 5 Q44 8 49 8 Q59 9 59 18 V45 Q59 55 49 55 H10 Q0 55 0 45 V18 Q0 9 10 8Z" fill="#8696a0"/><circle cx="30" cy="29" r="12" fill="none" stroke="#1f2c34" stroke-width="5"/></svg></button>
      </div>
      <button type="button" class="mic" aria-label="Mensaje de voz"><svg width="44" height="62" viewBox="0 0 44 62" aria-hidden="true"><rect x="13" y="0" width="18" height="37" rx="9" fill="#fff"/><path d="M3 30 Q5 46 22 47 Q39 46 41 30 M22 47 V59" fill="none" stroke="#fff" stroke-width="6" stroke-linecap="round"/></svg></button>
    </form>
  </main>

  <nav class="nav">
    <button class="icon-btn" aria-label="Recientes"><svg width="46" height="46" viewBox="0 0 46 46" aria-hidden="true"><rect x="4" y="4" width="38" height="38" rx="3"/></svg></button>
    <button class="icon-btn" aria-label="Inicio"><svg width="46" height="46" viewBox="0 0 46 46" aria-hidden="true"><circle cx="23" cy="23" r="21"/></svg></button>
    <button class="icon-btn" aria-label="Volver"><svg width="46" height="46" viewBox="0 0 46 46" aria-hidden="true"><path d="M37 2 Q39 1 39 4 V42 Q39 45 37 44 L4 25 Q2 23 4 21Z"/></svg></button>
  </nav>
</div>
</body>
</html>
```

FILE: styles.css
```css
* { box-sizing: border-box; }

body {
  margin: 0;
  background: #0b141a;
  color: #e9edef;
  font-family: Roboto, "Liberation Sans", sans-serif;
}

h1, p { margin: 0; }
svg { display: block; flex: none; }
.sprite { position: absolute; width: 0; height: 0; }

.icon-btn {
  display: flex;
  flex: none;
  padding: 0;
  border: 0;
  background: none;
}

.phone {
  display: flex;
  flex-direction: column;
  height: 100vh;
}

/* status bar */
.status {
  display: flex;
  align-items: center;
  flex: none;
  height: 99px;
  padding: 0 47px 0 42px;
  background: #000;
  color: #e2e2e2;
}
.status-time { font-size: 36px; font-weight: 500; line-height: 44px; padding-top: 4px; }
.bird { width: 36px; height: 36px; margin-left: 6px; }
.status-icons { display: flex; align-items: center; gap: 10px; margin-left: auto; }
.i-alarm, .i-vibrate, .i-signal { width: 36px; height: 36px; }
.i-signal-4g { width: 50px; height: 36px; overflow: visible; }
.net { font: 700 20px "Open Sans", sans-serif; fill: #e2e2e2; }
.battery {
  position: relative;
  width: 57px;
  height: 32px;
  margin: 0 4px 0 3px;
  border: 2px solid #e2e2e2;
  border-radius: 8px;
  background: #444 content-box;
  padding: 3px;
  font: 27px/22px "Open Sans", sans-serif;
  text-align: center;
}
.battery::after {
  content: "";
  position: absolute;
  top: 8px;
  right: -5px;
  width: 3px;
  height: 13px;
  background: #e2e2e2;
}

/* chat header */
.header {
  display: flex;
  align-items: center;
  flex: none;
  height: 168px;
  padding: 0 60px 0 25px;
  background: #1f2c34;
}
.avatar { width: 105px; height: 105px; margin: 0 26px 0 12px; }
.logo-a { font: 700 12px Roboto, sans-serif; }
.logo-b { font: 700 9px Roboto, sans-serif; }
.contact h1 { font-size: 54px; font-weight: 500; line-height: 64px; }
.contact p { font-size: 39px; line-height: 48px; padding-top: 6px; }
.actions { display: flex; align-items: center; gap: 93px; margin-left: auto; }

/* conversation */
.chat {
  position: relative;
  isolation: isolate;
  display: flex;
  flex: 1;
  flex-direction: column;
  justify-content: flex-end;
  min-height: 0;
  overflow: hidden;
  background: #071319;
}
.wallpaper {
  position: absolute;
  z-index: -1;
  inset: 0;
  width: 100%;
  height: 100%;
  fill: none;
  stroke: #162328;
  stroke-width: 3;
  stroke-linejoin: round;
  stroke-linecap: round;
}
.solid { fill: #162328; }
.doodle-text { font: 700 56px Roboto, sans-serif; stroke-width: 2; }
.doodle-letter { font: 700 76px Roboto, sans-serif; stroke-width: 2; }
.doodle-clock { font: 38px "Liberation Mono", monospace; stroke-width: 2; }

.msg { display: flex; flex: none; margin-top: 8px; padding: 0 48px; }
.msg.first { margin-top: 30px; }
.msg.first.last { margin-top: 23px; }
.msg.out { justify-content: flex-end; }

.bubble {
  position: relative;
  width: 80vw;
  border-radius: 36px;
  background: #1f2c34;
  box-shadow: 0 2px 2px rgba(0, 0, 0, .3);
}
.out .bubble { background: #005c4b; }
.bubble p {
  padding: 18px 54px 23px 30px;
  font-size: 48px;
  line-height: 57px;
}
.meta {
  display: flex;
  align-items: center;
  align-self: flex-end;
  gap: 12px;
  padding: 0 25px 10px 0;
  color: #8696a0;
  font-size: 36px;
  line-height: 42px;
  white-space: nowrap;
}
.out .meta { color: #8fbab1; padding-right: 27px; }
.bubble p .meta { float: right; margin: 28px -54px -12px 0; padding-bottom: 0; }
.ticks { width: 48px; height: 32px; }

.bubble.short { width: 58%; }
.bubble.one { display: flex; width: auto; }
.bubble.one p { padding-right: 42px; }
.out .bubble.one p { padding-right: 26px; }
.bubble.stack { display: flex; flex-direction: column; width: auto; }
.bubble.stack p { padding: 18px 36px 23px 30px; }

.first .bubble::before {
  content: "";
  position: absolute;
  top: 0;
  width: 22px;
  height: 33px;
  background: inherit;
}
.in.first .bubble { border-top-left-radius: 0; }
.in.first .bubble::before { left: -21px; clip-path: path("M6 0 H22 V33 H21 L2 10 Q-2 0 6 0Z"); }
.out.first .bubble { border-top-right-radius: 0; }
.out.first .bubble::before { right: -21px; clip-path: path("M16 0 H0 V33 H1 L20 10 Q24 0 16 0Z"); }

.unread {
  display: flex;
  flex: none;
  justify-content: center;
  margin-top: 12px;
  padding: 19px 0;
  background: rgba(11, 18, 24, .6);
}
.unread span {
  padding: 27px 60px 24px;
  border-radius: 48px;
  background: #1f2c34;
  font-size: 39px;
  font-weight: 700;
  line-height: 48px;
}

/* message box */
.composer {
  display: flex;
  flex: none;
  align-items: center;
  gap: 14px;
  margin: 25px 13px 13px 14px;
}
.field {
  display: flex;
  flex: 1;
  align-items: center;
  min-width: 0;
  height: 138px;
  padding: 0 44px 0 34px;
  border-radius: 69px;
  background: #1f2c34;
}
.field input {
  flex: 1;
  min-width: 0;
  padding: 3px 0 0;
  margin: 0 32px 0 35px;
  border: 0;
  outline: 0;
  background: none;
  color: #e9edef;
  font: 54px/64px Roboto, "Liberation Sans", sans-serif;
}
.field input::placeholder { color: #8696a0; opacity: 1; }
.clip { margin-right: 70px; }
.mic {
  display: flex;
  align-items: center;
  justify-content: center;
  width: 141px;
  height: 141px;
  padding: 0;
  border: 0;
  border-radius: 50%;
  background: #00a884;
  box-shadow: 0 3px 5px rgba(0, 0, 0, .4);
}

/* system navigation */
.nav {
  display: grid;
  grid-template-columns: repeat(3, 1fr);
  flex: none;
  align-items: center;
  justify-items: center;
  height: 120px;
  padding: 0 12.5%;
  background: #0b141a;
}
.nav svg { fill: none; stroke: #a2a5a8; stroke-width: 3; }
```
